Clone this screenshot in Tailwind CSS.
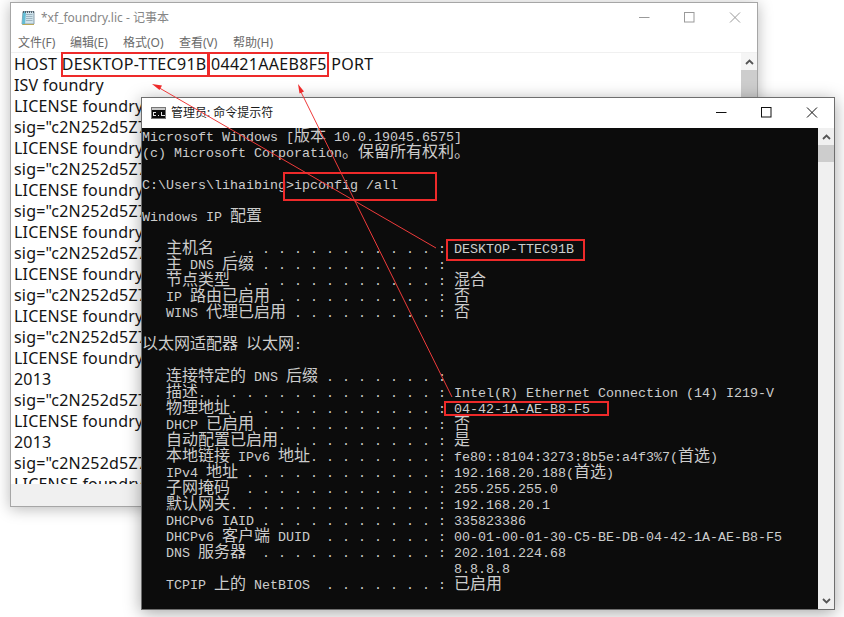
<!DOCTYPE html>
<html lang="zh-CN">
<head>
    <meta charset="UTF-8">
    <meta name="viewport" content="width=device-width, initial-scale=1.0">
    <title>ipconfig</title>
    <script src="https://cdn.jsdelivr.net/npm/@tailwindcss/browser@4"></script>
</head>
<body class="bg-white">
<div class="relative w-[844px] h-[617px] overflow-hidden bg-white font-['Noto_Sans','Noto_Sans_CJK_SC',sans-serif]">

    <!-- notepad window -->
    <div class="absolute left-[10px] top-[2px] w-[748px] h-[505px] flex flex-col bg-white border border-[#a6a6a6] shadow-[0_2px_14px_rgba(0,0,0,0.28)]">
        <div class="h-[30px] flex items-center shrink-0">
            <svg class="ml-[9px] w-[16px] h-[16px]" viewBox="0 0 16 16">
                <path d="M3 1.500h11v12.500H2z" fill="#cfe3ec" stroke="#8aa0ad"/>
                <path d="M2 14.500l1-13h3l-1 13z" fill="#62bcd4"/>
                <path d="M6 4.500h6.500M6 6.500h6.500M6 8.500h6.500M6 10.500h6.500" stroke="#9db4c0"/>
                <path d="M3.500 1v2M5.500 1v2M7.500 1v2M9.500 1v2M11.500 1v2M13.500 1v2" stroke="#55606a"/>
                <path d="M2.500 14.500H14" stroke="#b9a659"/>
            </svg>
            <span class="ml-[5px] text-[12px] text-[#858585] whitespace-nowrap">*xf_foundry.lic - 记事本</span>
            <div class="ml-auto flex items-center h-full">
                <svg class="w-[136px] h-[30px]" viewBox="0 0 136 30" fill="none" stroke="#9a9a9a">
                    <path d="M18 14.500h10.500"/>
                    <rect x="63.500" y="9.500" width="9.500" height="9.500"/>
                    <path d="M109 9.500l10 10M119 9.500l-10 10"/>
                </svg>
            </div>
        </div>
        <div class="h-[19px] flex items-center shrink-0 text-[12px] text-[#6a6a6a] pl-[7px] whitespace-nowrap">
            <span class="w-[52px]">文件(F)</span>
            <span class="w-[53px]">编辑(E)</span>
            <span class="w-[56px]">格式(O)</span>
            <span class="w-[54px]">查看(V)</span>
            <span>帮助(H)</span>
        </div>
        <div class="flex-1 min-h-0 flex border-t border-[#f0f0f0]">
            <div class="flex-1 overflow-hidden pl-[3px] pt-[1px] text-[16px] leading-[21px] tracking-[0.2px] text-[#141414] whitespace-nowrap">
                <div class="tracking-[0.3px]">HOST DESKTOP-TTEC91B 04421AAEB8F5 PORT</div>
                <div>ISV foundry</div>
                <div>LICENSE foundry</div>
                <div>sig="c2N252d5Z7</div>
                <div>LICENSE foundry</div>
                <div>sig="c2N252d5Z7</div>
                <div>LICENSE foundry</div>
                <div>sig="c2N252d5Z7</div>
                <div>LICENSE foundry</div>
                <div>sig="c2N252d5Z7</div>
                <div>LICENSE foundry</div>
                <div>sig="c2N252d5Z7</div>
                <div>LICENSE foundry</div>
                <div>sig="c2N252d5Z7</div>
                <div>LICENSE foundry</div>
                <div>2013</div>
                <div>sig="c2N252d5Z7</div>
                <div>LICENSE foundry</div>
                <div>2013</div>
                <div>sig="c2N252d5Z7</div>
                <div>LICENSE foundry</div>
            </div>
            <div class="w-[16px] bg-[#f0f0f0] flex flex-col shrink-0">
                <div class="h-[17px] flex items-center justify-center bg-[#f5f5f5]">
                    <svg class="w-[9px] h-[6px]" viewBox="0 0 9 6" fill="none" stroke="#555" stroke-width="1.800"><path d="M1 5l3.500-3.500L8 5"/></svg>
                </div>
                <div class="h-[28px] bg-[#cdcdcd]"></div>
            </div>
        </div>
        <div class="h-[22px] bg-[#f0f0f0] shrink-0"></div>
    </div>

    <!-- command prompt window -->
    <div class="absolute left-[141px] top-[97px] w-[694px] h-[513px] flex flex-col bg-white border border-[#6e6e6e] shadow-[0_3px_16px_rgba(0,0,0,0.35)]">
        <div class="h-[30px] flex items-center shrink-0">
            <svg class="ml-[9px] w-[15px] h-[12px]" viewBox="0 0 15 12">
                <rect x="0.500" y="0.500" width="14" height="11" fill="#0c0c0c" stroke="#777"/>
                <rect x="1" y="1" width="13" height="2" fill="#c8c8c8"/>
                <path d="M2 5h3v1H3v2h2v1H2zM7 8h1v1H7zM10 5h1v3h3v1h-4z" fill="#e6e6e6"/>
            </svg>
            <span class="ml-[5px] text-[12px] text-[#1a1a1a] whitespace-nowrap">管理员: 命令提示符</span>
            <div class="ml-auto h-full">
                <svg class="w-[136px] h-[30px]" viewBox="0 0 136 30" fill="none" stroke="#111">
                    <path d="M18 14.500h10.500"/>
                    <rect x="63.500" y="9.500" width="9.500" height="9.500"/>
                    <path d="M109 9.500l10 10M119 9.500l-10 10"/>
                </svg>
            </div>
        </div>
        <div class="flex-1 min-h-0 flex">
            <div class="flex-1 overflow-hidden pt-[2px] bg-[#0c0c0c] text-[#cccccc] font-['Liberation_Mono',monospace] text-[13.33px] leading-[16px] [&>div]:whitespace-pre [&>div]:h-[16px] [&_b]:font-['Noto_Sans_CJK_SC',sans-serif] [&_b]:font-normal [&_b]:text-[16px] [&_b]:leading-[0]">
                <div>Microsoft Windows [<b>版本</b> 10.0.19045.6575]</div>
                <div>(c) Microsoft Corporation<b>。保留所有权利。</b></div>
                <div></div>
                <div>C:\Users\lihaibing&gt;ipconfig /all</div>
                <div></div>
                <div>Windows IP <b>配置</b></div>
                <div></div>
                <div>   <b>主机名</b>  . . . . . . . . . . . . . : DESKTOP-TTEC91B</div>
                <div>   <b>主</b> DNS <b>后缀</b> . . . . . . . . . . . :</div>
                <div>   <b>节点类型</b>  . . . . . . . . . . . . : <b>混合</b></div>
                <div>   IP <b>路由已启用</b> . . . . . . . . . . : <b>否</b></div>
                <div>   WINS <b>代理已启用</b> . . . . . . . . . : <b>否</b></div>
                <div></div>
                <div><b>以太网适配器</b> <b>以太网</b>:</div>
                <div></div>
                <div>   <b>连接特定的</b> DNS <b>后缀</b> . . . . . . . :</div>
                <div>   <b>描述</b>. . . . . . . . . . . . . . . : Intel(R) Ethernet Connection (14) I219-V</div>
                <div>   <b>物理地址</b>. . . . . . . . . . . . . : 04-42-1A-AE-B8-F5</div>
                <div>   DHCP <b>已启用</b> . . . . . . . . . . . : <b>否</b></div>
                <div>   <b>自动配置已启用</b>. . . . . . . . . . : <b>是</b></div>
                <div>   <b>本地链接</b> IPv6 <b>地址</b>. . . . . . . . : fe80::8104:3273:8b5e:a4f3%7(<b>首选</b>)</div>
                <div>   IPv4 <b>地址</b> . . . . . . . . . . . . : 192.168.20.188(<b>首选</b>)</div>
                <div>   <b>子网掩码</b>  . . . . . . . . . . . . : 255.255.255.0</div>
                <div>   <b>默认网关</b>. . . . . . . . . . . . . : 192.168.20.1</div>
                <div>   DHCPv6 IAID . . . . . . . . . . . : 335823386</div>
                <div>   DHCPv6 <b>客户端</b> DUID  . . . . . . . : 00-01-00-01-30-C5-BE-DB-04-42-1A-AE-B8-F5</div>
                <div>   DNS <b>服务器</b>  . . . . . . . . . . . : 202.101.224.68</div>
                <div>                                       8.8.8.8</div>
                <div>   TCPIP <b>上的</b> NetBIOS  . . . . . . . : <b>已启用</b></div>
            </div>
            <div class="w-[16px] bg-[#f0f0f0] flex flex-col shrink-0">
                <div class="h-[17px] flex items-center justify-center">
                    <svg class="w-[9px] h-[6px]" viewBox="0 0 9 6" fill="none" stroke="#555" stroke-width="1.800"><path d="M1 5l3.500-3.500L8 5"/></svg>
                </div>
                <div class="h-[17px] bg-[#cdcdcd]"></div>
                <div class="mt-auto h-[17px] flex items-center justify-center">
                    <svg class="w-[9px] h-[6px]" viewBox="0 0 9 6" fill="none" stroke="#555" stroke-width="1.800"><path d="M1 1l3.500 3.500L8 1"/></svg>
                </div>
            </div>
        </div>
    </div>

    <!-- red annotations -->
    <svg class="absolute left-0 top-0 w-[844px] h-[617px] pointer-events-none" viewBox="0 0 844 617" fill="none">
        <g stroke="#ee2a2a" stroke-width="2">
            <rect x="62" y="53" width="146" height="23"/>
            <rect x="209" y="53" width="119" height="23"/>
            <rect x="284" y="173" width="152" height="27"/>
            <rect x="447" y="240" width="137" height="20"/>
            <rect x="445" y="402" width="163" height="13"/>
        </g>
        <g stroke="#ee3b3b" stroke-width="1">
            <path d="M436 248L156 86"/>
            <path d="M452 397L300 90"/>
        </g>
        <g fill="#ee2a2a">
            <path d="M152 84l10 1.500l-2.500 4.500z"/>
            <path d="M298 84l6 7.500l-4.500 2z"/>
        </g>
    </svg>
</div>
</body>
</html>
